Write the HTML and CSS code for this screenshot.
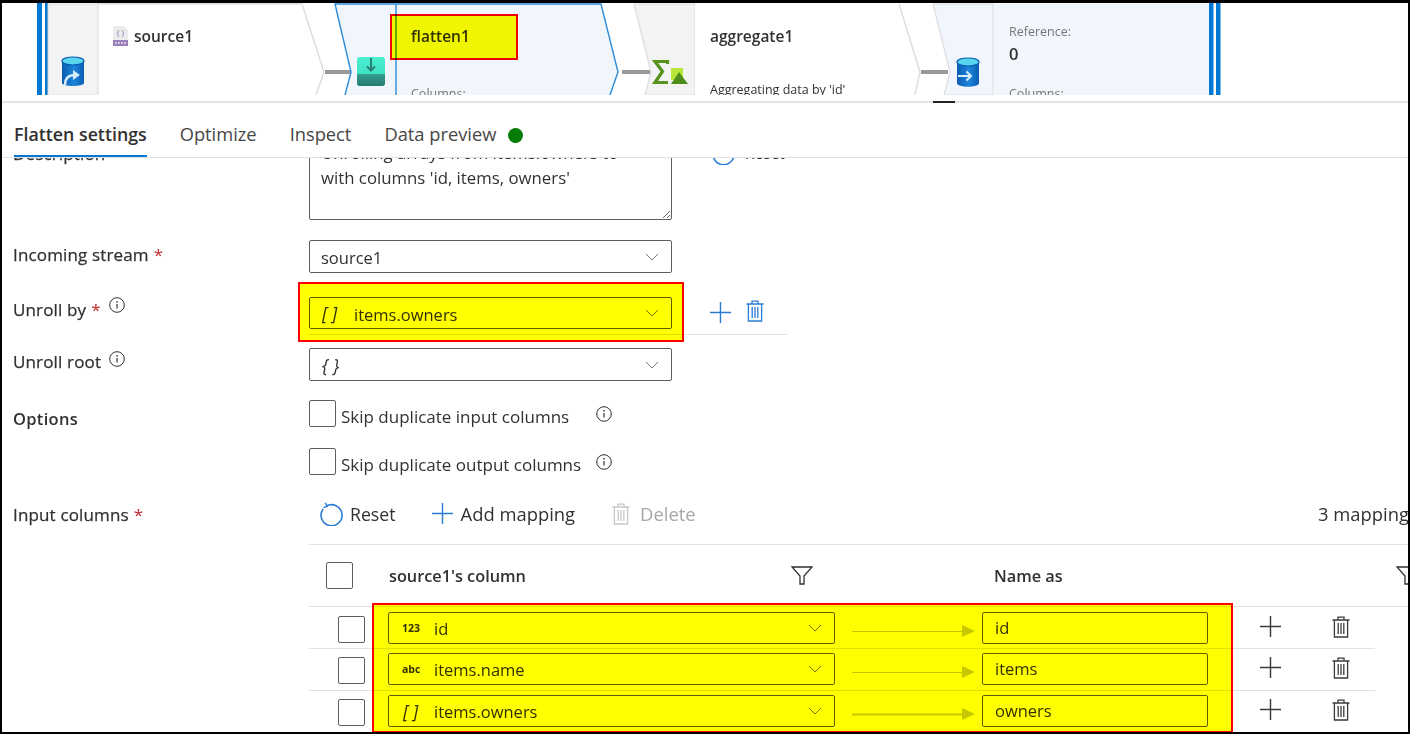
FILE: index.html
```html
<!DOCTYPE html>
<html lang="en">
<head>
<meta charset="utf-8">
<title>Flatten settings</title>
<link rel="stylesheet" href="styles.css">
</head>
<body>
<svg class="defs" width="0" height="0" aria-hidden="true">
  <symbol id="i-info" viewBox="0 0 16 16"><circle cx="8" cy="8" r="7.3" fill="none" stroke="currentColor" stroke-width="1"/><path d="M8 7v4.600" stroke="currentColor" stroke-width="1.200"/><circle cx="8" cy="4.900" r=".8" fill="currentColor"/></symbol>
  <symbol id="i-plus" viewBox="0 0 22 22"><path d="M11 0v22M0 11h22" stroke="currentColor" stroke-width="1.500" fill="none"/></symbol>
  <symbol id="i-trash" viewBox="0 0 18 22"><path d="M0.500 4h17M6 4V1.200h6V4M2.400 4v17h13.200V4M6.200 7v11M9 7v11M11.800 7v11" stroke="currentColor" stroke-width="1.300" fill="none"/></symbol>
  <symbol id="i-chev" viewBox="0 0 14 8"><path d="M1 1l6 6 6-6" stroke="currentColor" stroke-width="1" fill="none"/></symbol>
  <symbol id="i-filter" viewBox="0 0 22 19"><path d="M1 1h20l-8 9v8H9v-8z" stroke="currentColor" stroke-width="1.300" fill="none"/></symbol>
  <symbol id="i-reset" viewBox="0 0 24 24"><path d="M6.200 4.200A10.500 10.500 0 1 1 3.100 7" stroke="#2b7cd3" stroke-width="1.600" fill="none"/><path d="M5.200 0.800l2 3.500-3.800 1.400" stroke="#2b7cd3" stroke-width="1.400" fill="none"/></symbol>
</svg>

<main class="frame">
  <section class="canvas">
    <svg class="flow" width="1406" height="92" viewBox="2 3 1406 92">
      <defs>
        <linearGradient id="cyl" x1="0" y1="0" x2="1" y2="0"><stop offset="0" stop-color="#0a5cb0"/><stop offset=".55" stop-color="#1c86dc"/><stop offset="1" stop-color="#0a5cb0"/></linearGradient>
        <linearGradient id="tealtop" x1="0" y1="0" x2="0" y2="1"><stop offset="0" stop-color="#4aeed0"/><stop offset="1" stop-color="#38dcbc"/></linearGradient>
        <linearGradient id="tealbot" x1="0" y1="0" x2="0" y2="1"><stop offset="0" stop-color="#33a08f"/><stop offset="1" stop-color="#267a6e"/></linearGradient>
      </defs>
      <!-- source1 -->
      <rect x="37" y="3" width="5" height="92" fill="#0078d4"/>
      <rect x="45" y="3" width="3" height="92" fill="#0078d4"/>
      <rect x="48" y="4" width="50" height="91" fill="#f3f3f3" stroke="#dcdcdc"/>
      <path d="M98 4H302L324 72 316 95" fill="#fff" stroke="#dcdcdc" stroke-width="1.400"/>
      <path d="M62 61h22v22c0 4-22 4-22 0z" fill="url(#cyl)"/>
      <ellipse cx="73" cy="61" rx="11" ry="4" fill="#58d6ee" stroke="#0a5cb0" stroke-width="1.200"/>
      <path d="M65 85c0-7 3-10 10-10" stroke="#d6eafa" stroke-width="2.400" fill="none"/><path d="M73 70l7 5-7 5z" fill="#d6eafa"/>
      <path d="M113 26h11l4 4v16h-15z" fill="#ececec"/><rect x="113" y="40" width="15" height="6" fill="#9a7fb8"/>
      <path d="M119 30l-1 1v2l-1 .5 1 .5v2l1 1M122 30l1 1v2l1 .5-1 .5v2l-1 1" stroke="#8d6fb0" stroke-width=".7" fill="none"/>
      <path d="M115 43h11" stroke="#e8e0f0" stroke-width="1.400" stroke-dasharray="2 1"/>
      <text class="node-title" x="134" y="42">source1</text>
      <rect x="325" y="70" width="27" height="4" fill="#999"/>
      <!-- flatten1 -->
      <path d="M335 4H601L618 72 610 95H345L351 72z" fill="#f0f6fc"/>
      <path d="M345 95L351 72 335 4H601L618 72 610 95M396 4V95" fill="none" stroke="#2a8bd8" stroke-width="1.400"/>
      <rect x="357" y="57" width="28" height="29" rx="3" fill="url(#tealtop)"/>
      <path d="M357 74h28v9a3 3 0 0 1-3 3h-22a3 3 0 0 1-3-3z" fill="url(#tealbot)"/>
      <path d="M371 58v12M367 66.500l4 4 4-4" stroke="#2a7f72" stroke-width="2" fill="none"/>
      <text class="node-title" x="411" y="42">flatten1</text>
      <text class="node-meta" x="411" y="98">Columns:</text>
      <rect x="622" y="70" width="28" height="4" fill="#999"/>
      <!-- aggregate1 -->
      <path d="M634 4H695V95H645L651 72z" fill="#f3f3f3" stroke="#dcdcdc" stroke-width="1.200"/>
      <path d="M695 4H899L920 72 915 95H695z" fill="#fff"/>
      <path d="M899 4L920 72 915 95" fill="none" stroke="#dcdcdc" stroke-width="1.400"/>
      <path d="M667.500 64V61.500H655L662.500 71.500 655 82.500H668" fill="none" stroke="#57931c" stroke-width="3.200"/>
      <rect x="671" y="68" width="12" height="12" fill="#b6e63c"/>
      <path d="M671 84L679 72 688 84z" fill="#4e8f1a"/>
      <text class="node-title" x="710" y="42">aggregate1</text>
      <text class="node-desc" x="710" y="94">Aggregating data by 'id'</text>
      <rect x="921" y="70" width="27" height="4" fill="#999"/>
      <!-- sink -->
      <path d="M933 4H993V95H944L950 72z" fill="#f0f6fc" stroke="#dcdcdc" stroke-width="1.200"/>
      <rect x="993.600" y="4" width="215.400" height="91" fill="#f0f6fc"/>
      <path d="M957 62h22v21c0 5-22 5-22 0z" fill="url(#cyl)"/>
      <ellipse cx="968" cy="62" rx="11" ry="4" fill="#58d6ee" stroke="#0a5cb0" stroke-width="1.200"/>
      <path d="M958 76h12M966.500 71.500l4.500 4.500-4.500 4.500" stroke="#d8ecfa" stroke-width="2" fill="none"/>
      <text class="node-meta" x="1009" y="36">Reference:</text>
      <text class="node-value" x="1009" y="60">0</text>
      <text class="node-meta" x="1009" y="98">Columns:</text>
      <rect x="1209" y="3" width="4.500" height="92" fill="#0078d4"/>
      <rect x="1216" y="3" width="4.500" height="92" fill="#0078d4"/>
    </svg>
  </section>

  <div class="splitter"><span class="splitter-grip"></span></div>

  <nav class="tabs">
    <span class="tab tab-active">Flatten settings</span>
    <span class="tab">Optimize</span>
    <span class="tab">Inspect</span>
    <span class="tab">Data preview</span>
    <span class="status-dot"></span>
  </nav>

  <section class="panel">
    <div class="panel-body">
      <div class="row row-desc">
        <span class="label label-desc">Description</span>
        <textarea class="textarea" spellcheck="false">Unrolling arrays from items.owners to
with columns 'id, items, owners'</textarea>
        <span class="desc-reset"><svg class="ic-reset"><use href="#i-reset"/></svg><span>Reset</span></span>
      </div>

      <div class="row row-stream">
        <span class="label">Incoming stream <em>*</em></span>
        <div class="select select-form"><span class="sel-text">source1</span><svg class="chev"><use href="#i-chev"/></svg></div>
      </div>

      <div class="row row-unroll">
        <span class="label label-info">Unroll by <em>*</em><svg class="info"><use href="#i-info"/></svg></span>
        <div class="unroll-field">
          <div class="select select-form"><i class="type-brace">[ ]</i><span class="sel-text">items.owners</span><svg class="chev"><use href="#i-chev"/></svg></div>
          <svg class="ic-plus blue"><use href="#i-plus"/></svg>
          <svg class="ic-trash blue"><use href="#i-trash"/></svg>
        </div>
      </div>

      <div class="row row-root">
        <span class="label label-info">Unroll root<svg class="info"><use href="#i-info"/></svg></span>
        <div class="select select-form"><i class="type-brace">{ }</i><svg class="chev"><use href="#i-chev"/></svg></div>
      </div>

      <div class="row row-options">
        <span class="label label-options">Options</span>
        <div class="checks">
          <label class="check-row"><span class="check"></span><span class="check-text">Skip duplicate input columns</span><svg class="info info-a"><use href="#i-info"/></svg></label>
          <label class="check-row"><span class="check"></span><span class="check-text">Skip duplicate output columns</span><svg class="info info-b"><use href="#i-info"/></svg></label>
        </div>
      </div>

      <div class="row row-input">
        <span class="label label-input">Input columns <em>*</em></span>
        <div class="mapping">
          <div class="toolbar">
            <svg class="ic-reset"><use href="#i-reset"/></svg><span class="tool tool-reset">Reset</span>
            <svg class="ic-plus blue"><use href="#i-plus"/></svg><span class="tool tool-add">Add mapping</span>
            <svg class="ic-trash muted"><use href="#i-trash"/></svg><span class="tool tool-del">Delete</span>
            <span class="tool tool-count">3 mappings</span>
          </div>
          <div class="thead">
            <span class="check"></span>
            <span class="th th-src">source1's column</span>
            <svg class="ic-filter"><use href="#i-filter"/></svg>
            <span class="th th-name">Name as</span>
            <svg class="ic-filter ic-filter-end"><use href="#i-filter"/></svg>
          </div>

          <div class="trow trow-first">
            <span class="check"></span>
            <div class="select select-map"><i class="type-badge">123</i><span class="sel-text">id</span><svg class="chev"><use href="#i-chev"/></svg></div>
            <svg class="arrow" viewBox="0 0 123 12"><path d="M0 6.500h111" stroke="#c8c8c8" stroke-width="1"/><path d="M110 0l13 6-13 6z" fill="#c8c8c8"/></svg>
            <div class="name-input">id</div>
            <svg class="ic-plus dark"><use href="#i-plus"/></svg>
            <svg class="ic-trash dark"><use href="#i-trash"/></svg>
          </div>
          <div class="trow">
            <span class="check"></span>
            <div class="select select-map"><i class="type-badge">abc</i><span class="sel-text">items.name</span><svg class="chev"><use href="#i-chev"/></svg></div>
            <svg class="arrow" viewBox="0 0 123 12"><path d="M0 6.500h111" stroke="#c8c8c8" stroke-width="1"/><path d="M110 0l13 6-13 6z" fill="#c8c8c8"/></svg>
            <div class="name-input">items</div>
            <svg class="ic-plus dark"><use href="#i-plus"/></svg>
            <svg class="ic-trash dark"><use href="#i-trash"/></svg>
          </div>
          <div class="trow trow-last">
            <span class="check"></span>
            <div class="select select-map"><i class="type-brace type-brace-map">[ ]</i><span class="sel-text">items.owners</span><svg class="chev"><use href="#i-chev"/></svg></div>
            <svg class="arrow" viewBox="0 0 123 12"><path d="M0 6.500h111" stroke="#c8c8c8" stroke-width="2"/><path d="M110 0l13 6-13 6z" fill="#c8c8c8"/></svg>
            <div class="name-input">owners</div>
            <svg class="ic-plus dark"><use href="#i-plus"/></svg>
            <svg class="ic-trash dark"><use href="#i-trash"/></svg>
          </div>
        </div>
      </div>
    </div>
  </section>

  <div class="mark mark-flatten"></div>
  <div class="mark mark-unroll"></div>
  <div class="mark mark-table"></div>
</main>
</body>
</html>
```

FILE: styles.css
```css
* { box-sizing: border-box; }
html, body { margin: 0; padding: 0; background: #fff; }
body { font-family: "Open Sans", "Noto Sans", sans-serif; color: #323130; font-size: 16px; }
.defs { position: absolute; }
svg { display: block; flex: none; }

.frame {
  position: relative;
  width: 1410px;
  height: 734px;
  border-style: solid;
  border-color: #000;
  border-width: 3px 2px 2px;
  display: flex;
  flex-direction: column;
  overflow: hidden;
  background: #fff;
}

/* diagram */
.canvas { height: 92px; flex: none; overflow: hidden; }
.node-title { font: 600 15.500px "Open Sans", sans-serif; fill: #323130; }
.node-meta { font: 400 12.500px "Open Sans", sans-serif; fill: #767676; }
.node-desc { font: 400 12.500px "Open Sans", sans-serif; fill: #323130; }
.node-value { font: 600 16.500px "Open Sans", sans-serif; fill: #323130; }

.splitter { position: relative; height: 2px; margin-top: 6px; background: #e3e3e3; flex: none; }
.splitter-grip { position: absolute; left: 931px; top: 0; width: 22px; height: 2px; background: #222; }

/* tabs */
.tabs {
  height: 55px;
  flex: none;
  display: flex;
  align-items: stretch;
  padding-left: 12px;
  border-bottom: 1px solid #e1e1e1;
  position: relative;
  z-index: 1;
  background: #fff;
}
.tab { font-size: 18.300px; line-height: 62px; margin-right: 33px; white-space: nowrap; color: #484644; height: 54px; }
.tab-active { font-size: 17.800px; font-weight: 600; color: #323130; border-bottom: 2px solid #0078d4; }
.status-dot { width: 15px; height: 15px; border-radius: 50%; background: #077d07; margin: 25px 0 0 -21px; }

/* form */
.panel { flex: 1; min-height: 0; overflow: hidden; }
.panel-body { margin-top: -18px; padding-left: 11px; }
.row { display: grid; grid-template-columns: 296px 1fr; align-items: start; }
.label { font-size: 17px; letter-spacing: .15px; white-space: nowrap; line-height: 22px; display: flex; align-items: flex-start; gap: 5px; -webkit-text-stroke: .25px #323130; }
.label em { color: #c4262e; font-style: normal; -webkit-text-stroke: 0; }
.row-desc { position: relative; height: 80px; }
.label-desc { margin-top: 3px; }
.textarea {
  display: block;
  width: 363px;
  height: 80px;
  padding: 0 11px;
  border: 1px solid #605e5c;
  border-radius: 2px;
  font: 400 16.800px/24.500px "Open Sans", sans-serif;
  color: #323130;
  resize: both;
  overflow: hidden;
  outline: none;
  margin: 0;
}
.desc-reset { position: absolute; left: 699px; top: 0; display: flex; align-items: center; gap: 9px; font-size: 15.500px; height: 26px; }
.row-stream { margin-top: 20px; }
.row-stream .label { margin-top: 4px; }
.select {
  display: flex;
  align-items: center;
  height: 33px;
  border: 1px solid #605e5c;
  border-radius: 2px;
  background: #fff;
  position: relative;
}
.select-form { width: 363px; padding-left: 11px; }
.select-form .sel-text { position: relative; top: 1px; }
.sel-text { font-size: 16.500px; white-space: nowrap; }
.chev { width: 14px; height: 8px; margin-left: auto; margin-right: 12px; color: #7a7876; }
.type-brace { font-style: italic; font-size: 18px; line-height: 1; width: 33px; flex: none; white-space: pre; padding-left: 1px; }

.row-unroll { margin-top: 24px; }
.row-unroll .label { margin-top: 2px; }
.label-info .info { margin-top: -2px; margin-left: 3px; }
.row-root .label-info .info { margin-top: 0; }
.info { width: 16px; height: 16px; color: #323130; }
.unroll-field { display: flex; align-items: center; width: 478px; height: 38px; padding-bottom: 5px; border-bottom: 1px solid #e1e1e1; }
.unroll-field .select { height: 32px; }
.unroll-field .ic-plus { margin-left: 38px; margin-top: -2px; }
.unroll-field .ic-trash { margin-left: 15px; margin-top: -4px; }
.blue { color: #2b7cd3; }
.dark { color: #3a3a3a; }
.muted { color: #c8c8c8; }
.ic-plus { width: 21px; height: 21px; }
.ic-trash { width: 18px; height: 22px; }
.ic-reset { width: 24px; height: 24px; }
.ic-filter { width: 22px; height: 19px; color: #323130; }

.row-root { margin-top: 13px; }
.row-root .label { margin-top: 3px; }

.row-options { margin-top: 19px; }
.label-options { margin-top: 8px; font-weight: 600; -webkit-text-stroke: 0; font-size: 16.500px; letter-spacing: .3px; }
.checks { display: flex; flex-direction: column; gap: 21px; }
.check-row { display: flex; align-items: center; height: 27px; }
.check { display: block; width: 27px; height: 27px; border: 1px solid #605e5c; border-radius: 2px; flex: none; background: #fff; }
.check-text { font-size: 17px; margin-left: 5px; white-space: nowrap; position: relative; top: 3px; }
.info-a { margin-left: 27px; margin-top: 1px; }
.info-b { margin-left: 15px; margin-top: 1px; }

.row-input { margin-top: 17px; }
.label-input { margin-top: 12px; }
.mapping { width: 1099px; }
.toolbar { height: 53px; padding: 0 0 9px 11px; display: flex; align-items: center; border-bottom: 1px solid #e1e1e1; }
.tool { font-size: 18.400px; white-space: nowrap; }
.tool-reset { margin-left: 6px; font-size: 17.700px; }
.toolbar .ic-plus { margin-left: 36px; }
.tool-add { margin-left: 8px; }
.toolbar .ic-trash { margin-left: 37px; }
.tool-del { margin-left: 10px; color: #a6a6a6; }
.tool-count { margin-left: auto; margin-right: -40px; position: relative; width: 130px; }

.thead { height: 62px; display: flex; align-items: center; padding-left: 17px; border-bottom: 1px solid #e1e1e1; }
.th { font-size: 16.300px; font-weight: 600; white-space: nowrap; flex: none; }
.th-src { margin-left: 36px; width: 402px; }
.th-name { margin-left: 181px; width: 402px; }

.trow {
  width: 1066px;
  height: 42px;
  display: flex;
  align-items: flex-start;
  padding: 4px 0 0 29px;
  border-bottom: 1px solid #e1e1e1;
}
.trow-first { padding-top: 5px; }
.trow-last { border-bottom: 0; }
.trow > .check { margin-top: 4px; }
.select-map { width: 447px; height: 32px; margin-left: 23px; padding-left: 13px; }
.type-badge { font-style: normal; font-weight: 700; font-size: 10.500px; width: 32px; flex: none; }
.type-brace-map { width: 32px; }
.arrow { width: 123px; height: 12px; margin: 13px 0 0 17px; }
.name-input { width: 226px; height: 32px; margin-left: 7px; padding-left: 12px; border: 1px solid #605e5c; border-radius: 2px; font-size: 16.500px; line-height: 30px; background: #fff; }
.trow .ic-plus { margin: 4px 0 0 52px; }
.trow .ic-trash { margin: 4px 0 0 51px; }

/* annotation highlights drawn over the screenshot */
.mark { position: absolute; border: 2px solid #f00; background: #ffff00; mix-blend-mode: multiply; }
.mark-flatten { left: 388px; top: 11px; width: 128px; height: 46px; }
.mark-unroll { left: 296px; top: 279px; width: 386px; height: 60px; }
.mark-table { left: 370px; top: 600px; width: 861px; height: 130px; }
```
